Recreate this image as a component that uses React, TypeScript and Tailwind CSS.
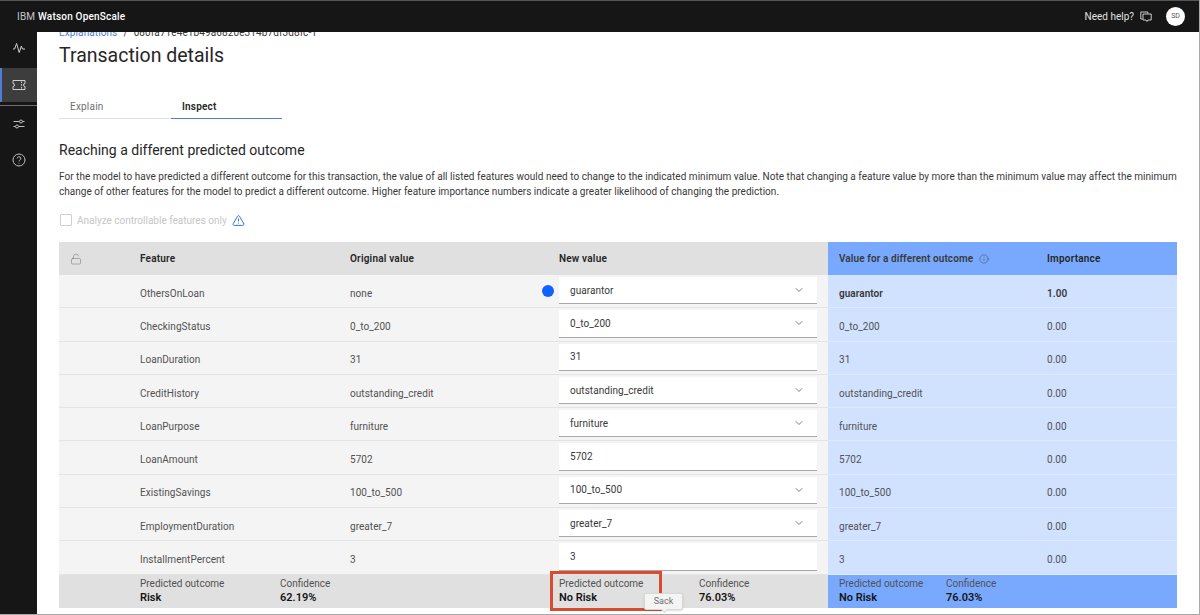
import { ChevronDown, Info, LockOpen, TriangleAlert } from "lucide-react";

const rows = [
  { name: "OthersOnLoan", original: "none", next: "guarantor", select: true, changed: true, importance: "1.00" },
  { name: "CheckingStatus", original: "0_to_200", next: "0_to_200", select: true, importance: "0.00" },
  { name: "LoanDuration", original: "31", next: "31", importance: "0.00" },
  { name: "CreditHistory", original: "outstanding_credit", next: "outstanding_credit", select: true, importance: "0.00" },
  { name: "LoanPurpose", original: "furniture", next: "furniture", select: true, importance: "0.00" },
  { name: "LoanAmount", original: "5702", next: "5702", importance: "0.00" },
  { name: "ExistingSavings", original: "100_to_500", next: "100_to_500", select: true, importance: "0.00" },
  { name: "EmploymentDuration", original: "greater_7", next: "greater_7", select: true, importance: "0.00" },
  { name: "InstallmentPercent", original: "3", next: "3", importance: "0.00" },
];

function Outcome({ label, value, width }: { label: string; value: string; width: string }) {
  return (
    <div className={`flex flex-col ${width}`}>
      <span className="text-[10px] leading-[13px] text-[#525252]">{label}</span>
      <span className="text-[11px] leading-[15px] font-semibold text-[#161616]">{value}</span>
    </div>
  );
}

function NavIcon({ children, active }: { children: React.ReactNode; active?: boolean }) {
  return (
    <div
      className={`flex w-full items-center justify-center ${
        active ? "h-[34px] border-l-2 border-[#4d7fd6] bg-[#3d3d3d] pr-[2px]" : "h-[36px]"
      }`}
    >
      {children}
    </div>
  );
}

export default function App() {
  return (
    <div
      className="flex h-[615px] w-[1200px] flex-col overflow-hidden border-r border-b border-[#a8a8a8] bg-white text-[#393939]"
      style={{ fontFamily: "Roboto, sans-serif" }}
    >
      {/* Top bar */}
      <header className="flex h-[32px] shrink-0 items-center justify-between border-t border-[#555] bg-[#161616] pr-[14px] pl-[17px] text-[#e0e0e0]">
        <div className="text-[10px] tracking-[0.2px]">
          <span className="text-[#c6c6c6]">IBM </span>
          <span className="font-medium text-white">Watson OpenScale</span>
        </div>
        <div className="flex items-center">
          <span className="text-[10px]">Need help?</span>
          <svg width="12" height="12" viewBox="0 0 12 12" fill="none" stroke="#e0e0e0" strokeWidth="0.9" className="ml-[6px]">
            <path d="M2.5 8H.8V1h7v1.6" />
            <path d="M3 3h8.2v6H8l-1 1.5L6 9H3z" />
          </svg>
          <div className="ml-[14px] flex h-[19px] w-[19px] items-center justify-center rounded-full bg-white text-[7px] text-[#525252]">
            SD
          </div>
        </div>
      </header>

      <div className="flex min-h-0 flex-1">
        {/* Side nav */}
        <nav className="flex w-[37px] shrink-0 flex-col bg-[#161616]">
          <NavIcon>
            <svg width="14" height="14" viewBox="0 0 14 14" fill="none" stroke="#d0d0d0" strokeWidth="1" className="-mt-[4px]">
              <path d="M1 8h1.6l2-5.5 2.6 9L9.4 5l1 3H13" />
            </svg>
          </NavIcon>
          <NavIcon active>
            <svg width="14" height="12" viewBox="0 0 14 12" fill="none" stroke="#d0d0d0" strokeWidth="1">
              <path d="M1 1.5h12v3a1.5 1.5 0 0 0 0 3v3H1v-3a1.5 1.5 0 0 0 0-3z" />
              <path d="M9.5 2.5v1.5M9.5 5.2v1.6M9.5 8v1.5" />
            </svg>
          </NavIcon>
          <div className="mt-[3px] h-px w-full bg-[#6f6f6f]" />
          <NavIcon>
            <svg width="14" height="14" viewBox="0 0 14 14" fill="none" stroke="#bdbdbd" strokeWidth="1">
              <path d="M1.5 4.5h6M10.5 4.5h2M1.5 9.5h2M6.5 9.5h6" />
              <circle cx="9" cy="4.5" r="1.5" />
              <circle cx="5" cy="9.5" r="1.5" />
            </svg>
          </NavIcon>
          <NavIcon>
            <svg width="14" height="14" viewBox="0 0 14 14" fill="none" stroke="#bdbdbd" strokeWidth="1">
              <circle cx="7" cy="7" r="6" />
              <path d="M5.2 5.4a1.8 1.8 0 1 1 2.6 1.7c-.5.3-.8.6-.8 1.3" />
              <path d="M7 9.8v.8" />
            </svg>
          </NavIcon>
        </nav>

        {/* Main */}
        <main className="flex min-w-0 flex-1 flex-col overflow-hidden pr-[22px] pl-[22px]">
          <div className="-mt-[4px] flex h-[9px] items-center text-[10px] tracking-[0.1px] whitespace-nowrap">
            <span className="text-[#4d7fd6]">Explanations</span>
            <span className="mx-[6px]">/</span>
            <span>080fa71e4e1b49a6820e314b7df3d8fc-1</span>
          </div>
          <h1 className="mt-[5px] text-[19.5px] leading-[28px] font-normal text-[#262626]">Transaction details</h1>

          {/* Tabs */}
          <div className="mt-[21px] flex text-[10px] tracking-[0.2px]">
            <div className="h-[28px] w-[112px] border-b border-[#e0e0e0] pt-[8px] pl-[11px] text-[#6f6f6f]">Explain</div>
            <div className="h-[28px] w-[111px] border-b border-[#4d7fd6] pt-[8px] pl-[11px] font-semibold text-[#262626]">Inspect</div>
          </div>

          <h2 className="mt-[21px] text-[14px] leading-[20px] font-normal text-[#262626]">Reaching a different predicted outcome</h2>
          <p className="mt-[10px] w-[1125px] text-[10px] leading-[14.5px] tracking-[0.03px] text-[#393939]">
            For the model to have predicted a different outcome for this transaction, the value of all listed features would need to change to the indicated minimum value. Note that changing a feature value by more than the minimum value may affect the minimum change of other features for the model to predict a different outcome. Higher feature importance numbers indicate a greater likelihood of changing the prediction.
          </p>

          <div className="mt-[14px] flex h-[14px] items-center pl-px text-[10px] text-[#c6c6c6]">
            <span className="h-[12px] w-[12px] rounded-[1px] border border-[#d0d0d0]" />
            <span className="ml-[5px]">Analyze controllable features only</span>
            <TriangleAlert size={13} strokeWidth={1.8} className="ml-[5px] text-[#2f6fd8]" />
          </div>

          {/* Table */}
          <div className="relative mt-[15px] w-[1118px] text-[10px]">
            <div className="flex h-[33px] items-center font-semibold tracking-[0.2px] text-[#262626]">
              <div className="flex h-full w-[769px] items-center bg-[#e0e0e0]">
                <div className="w-[81px] pl-[11px]">
                  <LockOpen size={12} strokeWidth={1} className="text-[#6f6f6f]" />
                </div>
                <div className="w-[210px]">Feature</div>
                <div className="w-[209px]">Original value</div>
                <div>New value</div>
              </div>
              <div className="flex h-full flex-1 items-center bg-[#78a9ff] pl-[11px]">
                <div className="flex w-[208px] items-center tracking-[0.1px] text-[#393939]">
                  Value for a different outcome
                  <Info size={10} strokeWidth={1} className="ml-[6px]" />
                </div>
                <div>Importance</div>
              </div>
            </div>

            {rows.map((row) => (
              <div key={row.name} className="flex h-[33.3px] items-stretch tracking-[0.05px] text-[#525252]">
                <div className="flex w-[769px] border-b border-[#e4e4e4] bg-[#f4f4f4]">
                  <div className="w-[81px]" />
                  <div className="w-[210px] self-center pt-[4px]">{row.name}</div>
                  <div className="relative w-[209px] self-center pt-[4px]">
                    {row.original}
                    {row.changed && <span className="absolute top-[3px] right-[5px] h-[12px] w-[12px] rounded-full bg-[#0f62fe]" />}
                  </div>
                  <div className="mt-[2px] mb-[3px] flex w-[258px] items-center justify-between border-b border-[#a8a8a8] bg-white pr-[12px] pl-[11px] text-[#393939]">
                    {row.next}
                    {row.select && <ChevronDown size={12} strokeWidth={1.3} />}
                  </div>
                </div>
                <div className="flex flex-1 items-center border-b border-[#dfeaff] bg-[#d0e2ff] pt-[4px] pl-[11px]">
                  <div className={`w-[208px] ${row.changed ? "font-semibold text-[#393939]" : ""}`}>{row.next}</div>
                  <div className={row.changed ? "font-semibold text-[#393939]" : ""}>{row.importance}</div>
                </div>
              </div>
            ))}

            {/* Outcome footer */}
            <div className="flex h-[33px] items-center">
              <div className="flex h-full w-[769px] items-center bg-[#e0e0e0] pl-[81px]">
                <Outcome label="Predicted outcome" value="Risk" width="w-[140px]" />
                <Outcome label="Confidence" value="62.19%" width="w-[279px]" />
                <Outcome label="Predicted outcome" value="No Risk" width="w-[140px]" />
                <Outcome label="Confidence" value="76.03%" width="w-[100px]" />
              </div>
              <div className="flex h-full flex-1 items-center bg-[#78a9ff] pl-[11px]">
                <Outcome label="Predicted outcome" value="No Risk" width="w-[107px]" />
                <Outcome label="Confidence" value="76.03%" width="w-[100px]" />
              </div>
            </div>

            {/* Annotation over the footer */}
            <div className="absolute top-[329px] left-[491px] h-[40px] w-[112px] border-[3px] border-[#da4a2e]" />
            <div className="absolute top-[351px] left-[585px] flex h-[17px] w-[39px] items-center justify-center rounded-[2px] border border-[#d8d8d8] bg-[#f4f4f4] text-[9px] text-[#6f6f6f] shadow-sm">
              Sack
              <span className="absolute -bottom-[3px] left-[17px] h-[5px] w-[5px] rotate-45 border-r border-b border-[#d8d8d8] bg-[#f4f4f4]" />
            </div>
          </div>
        </main>
      </div>
    </div>
  );
}
